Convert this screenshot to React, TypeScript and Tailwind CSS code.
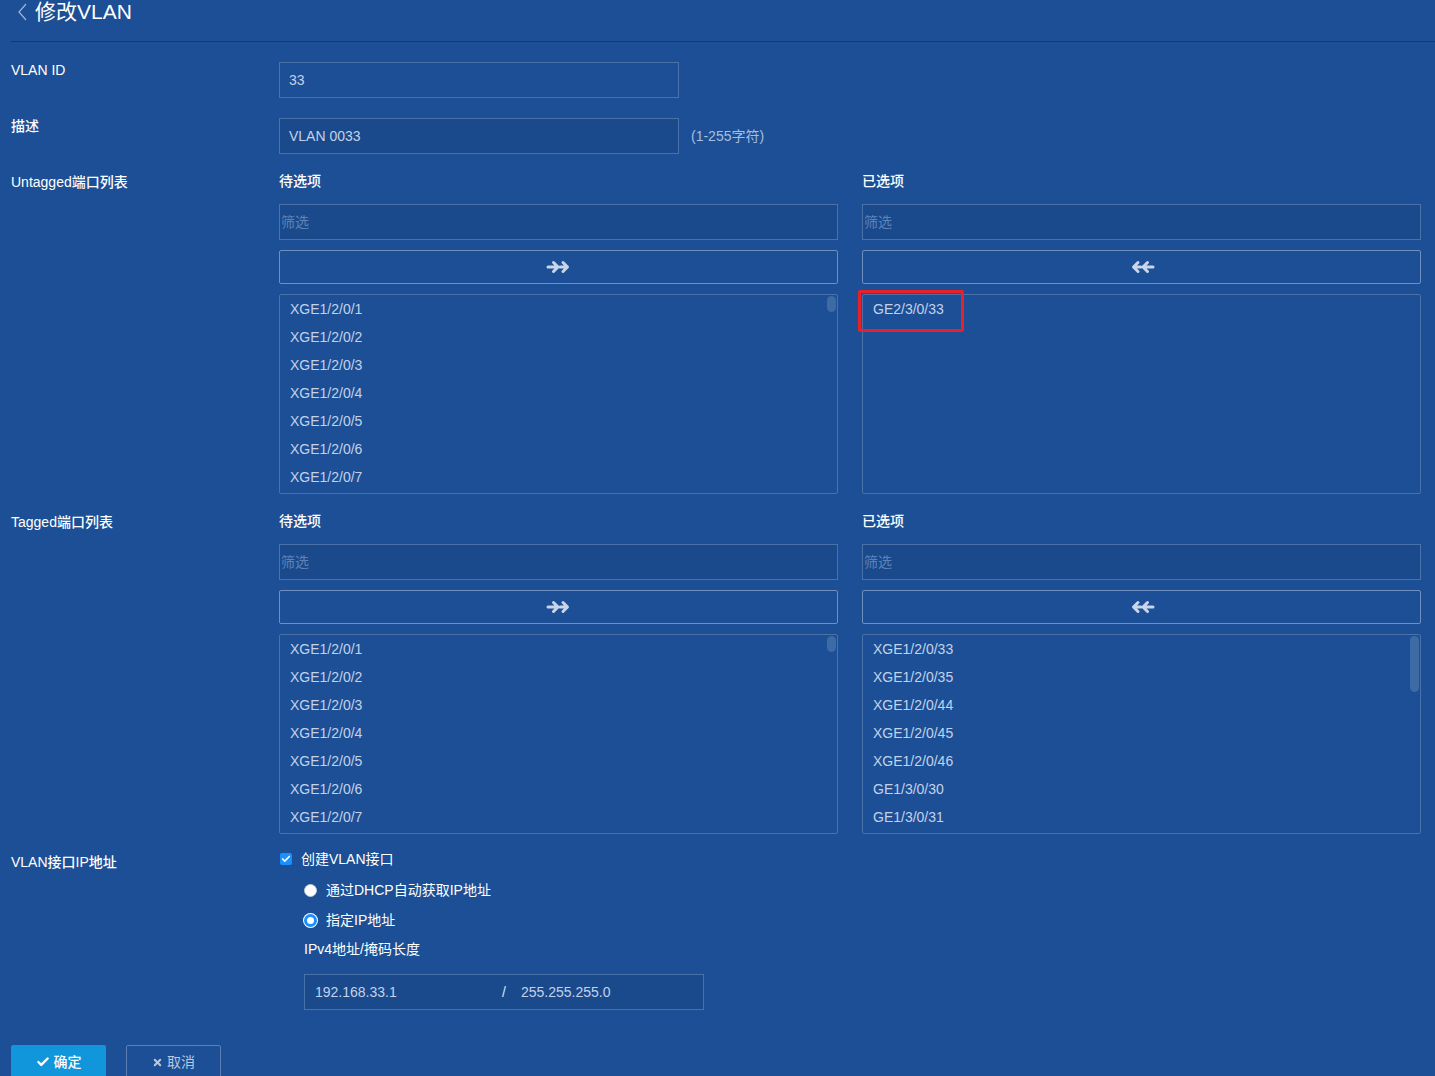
import { Check, X } from "lucide-react"

const font = { fontFamily: '"Liberation Sans", Arial, "Noto Sans CJK SC", sans-serif' }

const avail = ["XGE1/2/0/1", "XGE1/2/0/2", "XGE1/2/0/3", "XGE1/2/0/4", "XGE1/2/0/5", "XGE1/2/0/6", "XGE1/2/0/7"]
const taggedSel = ["XGE1/2/0/33", "XGE1/2/0/35", "XGE1/2/0/44", "XGE1/2/0/45", "XGE1/2/0/46", "GE1/3/0/30", "GE1/3/0/31"]

function Arrows({ dir }: { dir: "right" | "left" }) {
  return (
    <svg width="26" height="14" viewBox="0 0 26 14" className={dir === "left" ? "-scale-x-100" : ""}>
      <g fill="none" stroke="#c9d6ea" strokeWidth="3" strokeLinecap="round" strokeLinejoin="round">
        <path d="M2 7h9M7.5 2.5L12 7l-4.5 4.5" />
        <path d="M17 2.5L21.5 7 17 11.5M14 7h7" />
      </g>
    </svg>
  )
}

function PortList({ items, thumb }: { items: string[]; thumb: "short" | "long" | "none" }) {
  return (
    <div className="relative h-[200px] border border-[#4a71a8] rounded-[2px] overflow-hidden">
      <div className="flex flex-col pt-[6px]">
        {items.map((p) => (
          <div key={p} className="h-[28px] leading-[16px] pl-[10px] text-[14px] text-[#c3d2e9]">
            {p}
          </div>
        ))}
      </div>
      {thumb === "short" && <div className="absolute right-[1px] top-[1px] w-[9px] h-[16px] rounded-full bg-[#3e6aa6]" />}
      {thumb === "long" && <div className="absolute right-[1px] top-[1px] w-[9px] h-[56px] rounded-full bg-[#3e6aa6]" />}
    </div>
  )
}

function Transfer({ left, right, tall }: { left: string[]; right: string[]; tall?: boolean }) {
  return (
    <div className="grid grid-cols-2 gap-[24px] w-[1142px]">
      {[0, 1].map((i) => (
        <div key={i} className="flex flex-col">
          <div className="h-[30px] text-[14px] text-white font-[500] leading-[14px]">{i === 0 ? "待选项" : "已选项"}</div>
          <div className="h-[36px] border border-[#4a71a8] bg-[#1a4a8c] text-[14px] text-[#5d82b8] flex items-center pl-[1px]">
            筛选
          </div>
          <div className="mt-[10px] h-[34px] border border-[#6f8fc0] rounded-[2px] flex items-center justify-center">
            <Arrows dir={i === 0 ? "right" : "left"} />
          </div>
          <div className="mt-[10px] relative">
            {i === 0 ? (
              <PortList items={left} thumb="short" />
            ) : (
              <PortList items={right} thumb={tall ? "long" : "none"} />
            )}
            {i === 1 && !tall && (
              <div className="absolute left-[-4px] top-[-4px] w-[106px] h-[42px] border-[3px] border-[#e8202a] rounded-[2px]" />
            )}
          </div>
        </div>
      ))}
    </div>
  )
}

function Row({ label, children, className }: { label: string; children: React.ReactNode; className?: string }) {
  return (
    <div className={"flex " + (className ?? "")}>
      <div className="w-[268px] shrink-0 text-[14px] font-[500] text-white leading-[16px]">{label}</div>
      <div className="flex-1">{children}</div>
    </div>
  )
}

export default function App() {
  return (
    <div className="min-h-[1076px] w-[1435px] bg-[#1c4f95] overflow-hidden" style={font}>
      <div className="flex items-center h-[24px] pl-[18px] text-white text-[21px] leading-[24px]">
        <svg width="10" height="18" viewBox="0 0 10 18" className="mr-[7px]">
          <path d="M8 1L1 9l7 8" fill="none" stroke="#9fb6da" strokeWidth="1.2" />
        </svg>
        修改VLAN
      </div>
      <div className="ml-[11px] mt-[17px] h-[1px] bg-[#133c73]" />
      <div className="pl-[11px] pt-[20px]">
        <Row label="VLAN ID" className="h-[56px]">
          <div className="w-[400px] h-[36px] border border-[#4a71a8] flex items-center pl-[9px] text-[14px] text-[#c3d2e9]">
            33
          </div>
        </Row>
        <Row label="描述" className="h-[56px]">
          <div className="flex items-center">
            <div className="w-[400px] h-[36px] border border-[#4a71a8] bg-[#1a4a8c] flex items-center pl-[9px] text-[14px] text-[#c3d2e9]">
              VLAN 0033
            </div>
            <span className="ml-[12px] text-[14px] text-[#a9bedf]">(1-255字符)</span>
          </div>
        </Row>
        <Row label="Untagged端口列表">
          <Transfer left={avail} right={["GE2/3/0/33"]} />
        </Row>
        <Row label="Tagged端口列表" className="pt-[20px]">
          <Transfer left={avail} right={taggedSel} tall />
        </Row>
        <Row label="VLAN接口IP地址" className="pt-[20px]">
          <div className="-mt-[3px] flex flex-col text-[14px] text-white leading-[16px]">
            <div className="flex items-center h-[16px] pl-[1px]">
              <span className="w-[12px] h-[12px] bg-[#1890ff] rounded-[2px] flex items-center justify-center mr-[9px]">
                <Check size={10} strokeWidth={4} color="white" />
              </span>
              创建VLAN接口
            </div>
            <div className="flex items-center h-[16px] mt-[15px] pl-[25px]">
              <span className="w-[13px] h-[13px] rounded-full bg-white border border-[#c0c8d4] mr-[9px]" />
              通过DHCP自动获取IP地址
            </div>
            <div className="flex items-center h-[16px] mt-[14px] pl-[25px]">
              <span className="w-[13px] h-[13px] rounded-full bg-white border-[3px] border-[#1890ff] ring-1 ring-white mr-[9px]" />
              指定IP地址
            </div>
            <div className="h-[16px] mt-[13px] pl-[25px]">IPv4地址/掩码长度</div>
            <div className="ml-[25px] mt-[17px] w-[400px] h-[36px] border border-[#4a71a8] bg-[#1a4a8c] flex items-center text-[#c3d2e9]">
              <span className="pl-[10px] w-[197px]">192.168.33.1</span>
              <span className="w-[19px] text-[#dce6f5]">/</span>
              <span>255.255.255.0</span>
            </div>
          </div>
        </Row>
        <div className="flex gap-[20px] mt-[35px]">
          <button className="w-[95px] h-[34px] bg-[#1296db] rounded-t-[2px] text-white text-[14px] font-[500] flex items-center justify-center gap-[4px]">
            <Check size={14} strokeWidth={4} />
            确定
          </button>
          <button className="w-[95px] h-[34px] border border-[#5c7fb3] rounded-t-[2px] text-[#b8c8e2] text-[14px] flex items-center justify-center gap-[4px]">
            <X size={11} strokeWidth={4.5} />
            取消
          </button>
        </div>
      </div>
    </div>
  )
}
